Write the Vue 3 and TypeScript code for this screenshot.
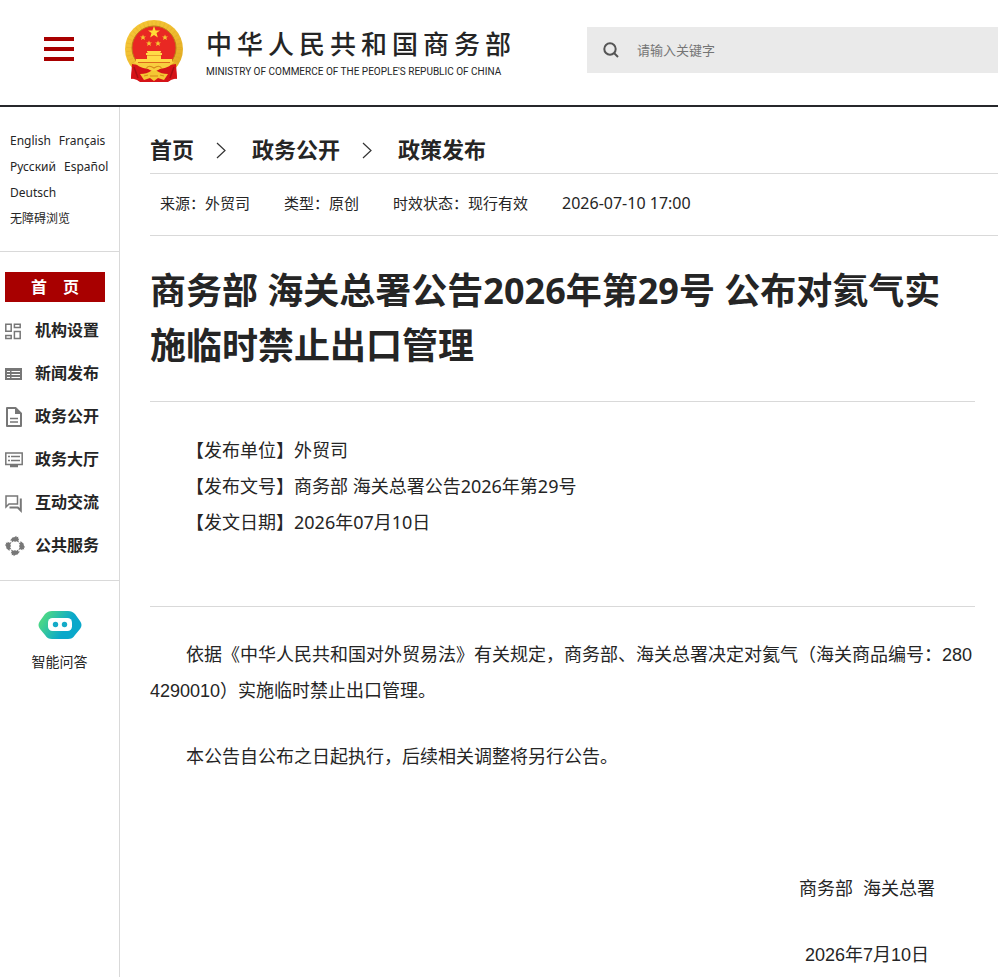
<script setup lang="ts">
interface NavItem {
  label: string
  icon: string
}

const navItems: NavItem[] = [
  { label: '机构设置', icon: 'grid' },
  { label: '新闻发布', icon: 'news' },
  { label: '政务公开', icon: 'doc' },
  { label: '政务大厅', icon: 'hall' },
  { label: '互动交流', icon: 'chat' },
  { label: '公共服务', icon: 'service' },
]

const crumbs: string[] = ['首页', '政务公开', '政策发布']
const languages: string[] = ['English', 'Français', 'Русский', 'Español', 'Deutsch', '无障碍浏览']

const details = [
  { name: '发布单位', value: '外贸司' },
  { name: '发布文号', value: '商务部 海关总署公告2026年第29号' },
  { name: '发文日期', value: '2026年07月10日' },
]
const turns: number[] = [0, 90, 180, 270]
</script>

<template>
  <div class="page">
    <header class="top">
      <button class="menu" type="button" aria-label="菜单">
        <span></span><span></span><span></span>
      </button>
      <a class="brand" href="#">
        <svg class="emblem" width="60" height="64" viewBox="0 0 60 64" aria-hidden="true">
          <defs>
            <linearGradient id="gold" x1="0" y1="0" x2="1" y2="1">
              <stop offset="0" stop-color="#f6c837" />
              <stop offset=".5" stop-color="#efbd31" />
              <stop offset="1" stop-color="#dda51e" />
            </linearGradient>
          </defs>
          <path d="M9 43 7 60l5-1 3 3h30l3-3 5 1-2-17z" fill="#d51318" />
          <circle cx="30" cy="30" r="29" fill="url(#gold)" />
          <circle cx="30" cy="30" r="25.300" fill="none" stroke="#d89b20" stroke-width="5" stroke-dasharray="1 3" opacity=".25" />
          <circle cx="30" cy="29" r="22" fill="#e92823" stroke="#bd7918" stroke-width="1" />
          <path d="M8 45c8 1 13 2 17 5l5 3 5-3c4-3 9-4 17-5l1 14-6 2-3 2H16l-3-2-6-2z" fill="#d51318" />
          <path d="M22 34h2l-1-1v-1h14v1l-1 1h2v2h-1v4h11v4H12v-4h11v-4h-1z" fill="#ffdb47" />
          <path d="M23 36.500h14" stroke="#e0861f" stroke-width=".7" />
          <path d="M10 43h40c-4 5-9 6-14 7l-6 3-6-3c-5-1-10-2-14-7z" fill="#f8ce3e" />
          <path d="M14 43.500h32" stroke="#dd6a1d" stroke-width="1" />
          <path d="M22 50c2-4 5-3 8-1 3-2 6-3 8 1" fill="none" stroke="#d7861b" stroke-width="1.200" />
          <path d="M16 55c5 0 8-1 11-3h6c3 2 6 3 11 3l-4 6-6-2-4 3-4-3-6 2z" fill="#f4c633" />
          <path d="m20 57 4-1M40 57l-4-1M26 57h8" stroke="#d7861b" stroke-width="1" />
          <path d="m10 48 4 11M50 48l-4 11" stroke="#a80f14" stroke-width="1.500" />
          <path d="m30 7 1.600 4.400h4.400l-3.500 2.700 1.300 4.400L30 15.900l-3.800 2.600 1.300-4.400L24 11.400h4.400z" fill="#ffdc36" />
          <g fill="#f5c633">
            <path id="small-star" d="m19 15.500 .8 1.900 2.200.1-1.700 1.300.6 2.100-1.900-1.200-1.900 1.200.6-2.100-1.700-1.300 2.200-.1z" />
            <use href="#small-star" x="22" />
            <use href="#small-star" x="6" y="6" />
            <use href="#small-star" x="15" y="6" />
          </g>
        </svg>
        <span class="brand-text">
          <span class="brand-cn">中华人民共和国商务部</span>
          <span class="brand-en">MINISTRY OF COMMERCE OF THE PEOPLE'S REPUBLIC OF CHINA</span>
        </span>
      </a>
      <form class="search" role="search" @submit.prevent>
        <button type="submit" aria-label="搜索">
          <svg width="16" height="16" viewBox="0 0 16 16" fill="none" stroke="#555" stroke-width="2">
            <circle cx="7" cy="7" r="5.700" />
            <path d="m11 11 4 4" />
          </svg>
        </button>
        <input type="search" placeholder="请输入关键字" aria-label="请输入关键字" />
      </form>
    </header>

    <div class="body">
      <aside class="side">
        <div class="langs">
          <a v-for="l in languages" :key="l" href="#">{{ l }}</a>
        </div>
        <nav class="nav">
          <a class="home" href="#"><span>首</span><span>页</span></a>
          <a v-for="item in navItems" :key="item.label" class="nav-item" href="#">
            <svg width="20" height="22" viewBox="0 0 20 22" fill="none" stroke="#777" stroke-width="1.500" aria-hidden="true">
              <template v-if="item.icon === 'grid'">
                <path d="M.8 4.200h5.400v7H.8zM9.400 4.200h5.800v3.400H9.400zM.8 15.400h5.400v3H.8zM9.400 11.400h5.800v7H9.400z" />
              </template>
              <template v-else-if="item.icon === 'news'">
                <path d="M0 5h17v12H0z" fill="#777" stroke="none" />
                <path d="M2 8.500h3M6.500 8.500H15M2 11.500h3M6.500 11.500H15M2 14.500h3M6.500 14.500H15" stroke="#fff" stroke-width="1" />
              </template>
              <template v-else-if="item.icon === 'doc'">
                <path d="M2 2h8.500l5.500 5.500V20H2z" stroke-width="2" stroke-linejoin="round" />
                <path d="M10 1.500v6.500h6.500z" fill="#777" stroke="none" />
                <path d="M5 12.500h8M5 16h8" />
              </template>
              <template v-else-if="item.icon === 'hall'">
                <path d="M.8 4h16.400v11.500H.8z" />
                <path d="M3 7.500h2M6 7.500h9M3 11.500h2M6 11.500h9" />
                <path d="M5 17h8" stroke-width="2.500" />
              </template>
              <template v-else-if="item.icon === 'chat'">
                <path d="M1 4h11.500v8H4l-3 3z" />
                <path d="M15.800 6.500v12l-3-3H4.500" stroke-width="2" />
              </template>
              <template v-else>
                <path
                  v-for="a in turns"
                  :key="a"
                  :transform="`rotate(${a} 10 11)`"
                  d="M5 5.500 8 2l.8.500L11.500.8l-.1 1.400 2-.4-.5 1.700 1.400.2-1 1.700.8 2.200-2.700-1.300-1.600.8L9 6 7 7.200 6.500 5.500z"
                  fill="#777"
                  stroke="none"
                />
              </template>
            </svg>
            <span>{{ item.label }}</span>
          </a>
        </nav>
        <a class="bot" href="#">
          <svg width="44" height="28" viewBox="0 0 44 28" aria-hidden="true">
            <defs>
              <linearGradient id="bot" x1="0" y1=".3" x2="1" y2=".7">
                <stop offset=".1" stop-color="#48d58a" />
                <stop offset=".65" stop-color="#0aa8ca" />
                <stop offset="1" stop-color="#0aa8ca" />
              </linearGradient>
            </defs>
            <path d="M14 0h16c3 0 5 1 7 3l5 7c2 3 2 5 0 8l-5 6c-2 3-4 4-7 4H14c-3 0-5-1-7-4l-5-6c-2-3-2-5 0-8l5-7c2-2 4-3 7-3z" fill="url(#bot)" />
            <rect x="10" y="7" width="24" height="13" rx="4.500" fill="#fff" />
            <circle cx="17.500" cy="13.500" r="2.700" fill="#14aac8" />
            <circle cx="26.500" cy="13.500" r="2.700" fill="#14aac8" />
          </svg>
          <span>智能问答</span>
        </a>
      </aside>

      <main class="main">
        <nav class="crumbs" aria-label="位置">
          <template v-for="(c, i) in crumbs" :key="c">
            <svg v-if="i > 0" width="10" height="18" viewBox="0 0 10 18" fill="none" stroke="#333" stroke-width="1.200" aria-hidden="true"><path d="m1 2 8 7.500L1 17" /></svg>
            <a href="#">{{ c }}</a>
          </template>
        </nav>
        <div class="meta">
          <span>来源：外贸司</span>
          <span>类型：原创</span>
          <span>时效状态：现行有效</span>
          <time>2026-07-10 17:00</time>
        </div>
        <article class="article">
          <h1>商务部 海关总署公告2026年第29号 公布对氦气实施临时禁止出口管理</h1>
          <div class="details">
            <p v-for="d in details" :key="d.name">【{{ d.name }}】{{ d.value }}</p>
          </div>
          <div class="text">
            <p>依据《中华人民共和国对外贸易法》有关规定，商务部、海关总署决定对氦气（海关商品编号：2804290010）实施临时禁止出口管理。</p>
            <p>本公告自公布之日起执行，后续相关调整将另行公告。</p>
            <p class="sign">商务部&nbsp; 海关总署</p>
            <p class="sign date">2026年7月10日</p>
          </div>
        </article>
      </main>
    </div>
  </div>
</template>

<style>
body {
  margin: 0;
  background: #fff;
}
</style>

<style scoped>
.page {
  font-family: "Noto Sans", "Noto Sans CJK SC", sans-serif;
  color: #252525;
  min-height: 100vh;
  display: flex;
  flex-direction: column;
  overflow: hidden;
}
a {
  color: inherit;
  text-decoration: none;
}
p, h1 {
  margin: 0;
}
button {
  border: 0;
  padding: 0;
  background: none;
  cursor: pointer;
}
svg {
  display: block;
  flex: none;
}
.top {
  display: flex;
  align-items: center;
  height: 105px;
  border-bottom: 2px solid #26272b;
}
.menu {
  display: flex;
  flex-direction: column;
  gap: 6px;
  margin: 0 50px 7px 44px;
}
.menu span {
  width: 30px;
  height: 4px;
  background: #a80000;
}
.brand {
  display: flex;
  gap: 22px;
  margin: 0 75px 4px 0;
}
.brand-text {
  display: flex;
  flex-direction: column;
  white-space: nowrap;
  width: 306px;
}
.brand-cn {
  font-size: 26px;
  line-height: 38px;
  letter-spacing: 5px;
  padding-top: 6px;
  font-weight: 500;
}
.brand-en {
  font-family: Roboto, "Liberation Sans", sans-serif;
  font-size: 10px;
  line-height: 18px;
}
.search {
  flex: 1;
  display: flex;
  align-items: center;
  gap: 18px;
  height: 46px;
  margin-bottom: 5px;
  padding-left: 16px;
  background: #eaeaea;
}
.search input {
  flex: 1;
  min-width: 0;
  border: 0;
  padding: 0;
  background: none;
  font: 13px "Noto Sans", "Noto Sans CJK SC", sans-serif;
  outline: none;
}
.search input::placeholder {
  color: #757575;
}
.body {
  flex: 1;
  display: flex;
}
.side {
  flex: none;
  width: 119px;
  border-right: 1px solid #d9d9d9;
}
.langs {
  display: flex;
  flex-wrap: wrap;
  column-gap: 8px;
  padding: 21px 0 19px 10px;
  border-bottom: 1px solid #d9d9d9;
  font-size: 12px;
  line-height: 26px;
}
.nav {
  padding: 20px 0 13px 5px;
  border-bottom: 1px solid #d9d9d9;
  font-size: 16px;
  font-weight: 700;
}
.home {
  display: flex;
  justify-content: center;
  gap: 16px;
  width: 100px;
  line-height: 30px;
  margin-bottom: 7px;
  background: #a80000;
  color: #fff;
}
.nav-item {
  display: flex;
  align-items: center;
  gap: 10px;
  line-height: 43px;
}
.bot {
  display: flex;
  flex-direction: column;
  align-items: center;
  gap: 12px;
  padding-top: 30px;
  font-size: 14px;
  line-height: 22px;
}
.main {
  flex: 1;
  min-width: 0;
  padding-left: 30px;
}
.crumbs {
  display: flex;
  align-items: center;
  height: 66px;
  border-bottom: 1px solid #d9d9d9;
  font-size: 22px;
  font-weight: 700;
}
.crumbs a {
  padding-top: 16px;
}
.crumbs svg {
  margin: 20px 26px 0 22px;
}
.meta {
  display: flex;
  gap: 34px;
  padding: 0 10px 2px;
  border-bottom: 1px solid #d9d9d9;
  font-size: 15px;
  line-height: 59px;
}
.meta time {
  font-size: 16px;
}
.article {
  margin-right: 23px;
}
h1 {
  padding: 27px 0 28px;
  border-bottom: 1px solid #d9d9d9;
  font-size: 36px;
  line-height: 55px;
}
.details {
  padding: 30px 0 66px 36px;
  border-bottom: 1px solid #d9d9d9;
  font-size: 18px;
  line-height: 36px;
}
.text {
  font-family: "Liberation Sans", "Noto Sans CJK SC", sans-serif;
  padding-top: 30px;
  font-size: 18px;
  line-height: 36px;
}
.text p {
  margin-bottom: 30px;
  text-indent: 36px;
  word-break: break-all;
}
.text .sign {
  margin-top: 96px;
  padding-right: 40px;
  text-align: right;
}
.text .date {
  margin: 0;
  padding-right: 46px;
}
</style>
